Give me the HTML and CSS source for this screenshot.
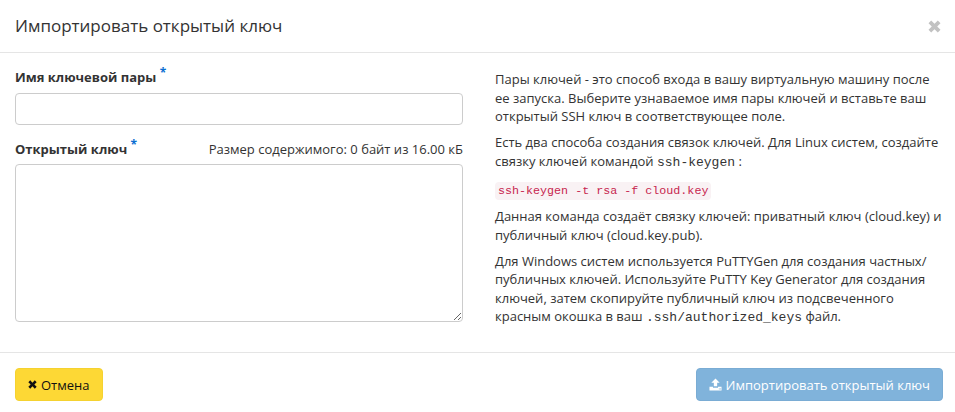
FILE: index.html
```html
<!DOCTYPE html>
<html lang="ru">
<head>
  <meta charset="UTF-8" />
  <meta name="viewport" content="width=device-width, initial-scale=1" />
  <title>Импортировать открытый ключ</title>
  <link rel="stylesheet" href="styles.css">
</head>
<body>

  <div class="modal">
    <div class="modal-header">
      <h4 class="modal-title">Импортировать открытый ключ</h4>
      <button class="close" aria-label="Закрыть">
        <svg width="13" height="13" viewBox="0 0 13 13"><path d="M0.5 3.2L3.2 0.5 6.5 3.8 9.8 0.5 12.5 3.2 9.2 6.5 12.5 9.8 9.8 12.5 6.5 9.2 3.2 12.5 0.5 9.8 3.8 6.5Z" fill="#c2c2c2"/></svg>
      </button>
    </div>

    <div class="modal-body">
      <div class="col-form">
        <div class="form-group">
          <label class="control-label" for="name">Имя ключевой пары <span class="req">*</span></label>
          <input type="text" id="name" class="form-control" />
        </div>
        <div class="form-group">
          <div class="label-row">
            <label class="control-label" for="key">Открытый ключ <span class="req">*</span></label>
            <span class="size-hint">Размер содержимого: 0 байт из 16.00 кБ</span>
          </div>
          <textarea id="key" class="form-control key-area"></textarea>
        </div>
      </div>

      <div class="col-help">
        <p>Пары ключей - это способ входа в вашу виртуальную машину после ее запуска. Выберите узнаваемое имя пары ключей и вставьте ваш открытый SSH ключ в соответствующее поле.</p>
        <p>Есть два способа создания связок ключей. Для Linux систем, создайте связку ключей командой <span class="mono">ssh-keygen</span> :</p>
        <p class="code-line"><code>ssh-keygen -t rsa -f cloud.key</code></p>
        <p>Данная команда создаёт связку ключей: приватный ключ (cloud.key) и публичный ключ (cloud.key.pub).</p>
        <p>Для Windows систем используется PuTTYGen для создания частных/публичных ключей. Используйте PuTTY Key Generator для создания ключей, затем скопируйте публичный ключ из подсвеченного красным окошка в ваш <span class="mono">.ssh/authorized_keys</span> файл.</p>
      </div>
    </div>

    <div class="modal-footer">
      <button class="btn btn-cancel">
        <svg width="9" height="9" viewBox="0 0 13 13"><path d="M0.5 3.2L3.2 0.5 6.5 3.8 9.8 0.5 12.5 3.2 9.2 6.5 12.5 9.8 9.8 12.5 6.5 9.2 3.2 12.5 0.5 9.8 3.8 6.5Z" fill="#111"/></svg>
        Отмена
      </button>
      <button class="btn btn-primary" disabled>
        <svg width="13" height="13" viewBox="0 0 14 14"><path d="M7 0.5L2.5 5H5.2V9H8.8V5H11.5Z" fill="#fff"/><path d="M0.5 9.5H4.3V10.5H9.7V9.5H13.5V13.5H0.5Z" fill="#fff"/><rect x="10.6" y="11.3" width="1" height="1" fill="#80b3db"/><rect x="12" y="11.3" width="1" height="1" fill="#80b3db"/></svg>
        Импортировать открытый ключ
      </button>
    </div>
  </div>

</body>
</html>
```

FILE: styles.css
```css
body {
  margin: 0;
  background: #fff;
  color: #333;
  font-family: 'Open Sans', 'Noto Sans', sans-serif;
  font-size: 13px;
  line-height: 1.42857;
}

.modal {
  width: 955px;
  background: #fff;
}

/* Header */
.modal-header {
  display: flex;
  justify-content: space-between;
  align-items: center;
  padding: 15px 14px 15px 15px;
  border-bottom: 1px solid #e5e5e5;
}

.modal-title {
  margin: 0;
  font-size: 17px;
  font-weight: normal;
  line-height: 22px;
  color: #333;
}

.close {
  background: none;
  border: none;
  padding: 0;
  display: flex;
  cursor: pointer;
}

/* Body */
.modal-body {
  display: grid;
  grid-template-columns: 448px 1fr;
  column-gap: 32px;
  padding: 15px 10px 15px 15px;
}

.form-group {
  margin-bottom: 15px;
}

.control-label {
  display: inline-block;
  margin-bottom: 6px;
  font-weight: bold;
}

.req {
  color: #0a6ed1;
  font-size: 12px;
  vertical-align: top;
  position: relative;
  top: -4px;
}

.label-row {
  display: flex;
  justify-content: space-between;
}

.size-hint {
  color: #333;
}

.form-control {
  display: block;
  box-sizing: border-box;
  width: 100%;
  height: 32px;
  margin: 0;
  padding: 6px 12px;
  border: 1px solid #ccc;
  border-radius: 4px;
  font-family: inherit;
  font-size: 13px;
  background: #fff;
}

.key-area {
  height: 158px;
  resize: vertical;
}

.col-help {
  padding-top: 2px;
}

.col-help p {
  margin: 0 0 7.5px;
}

.mono {
  font-family: 'Liberation Mono', monospace;
  font-size: 13px;
}

code {
  font-family: 'Liberation Mono', monospace;
  font-size: 11.7px;
  color: #c7254e;
  background: #f9f2f4;
  padding: 2px 3px;
  border-radius: 4px;
}

/* Footer */
.modal-footer {
  display: flex;
  justify-content: space-between;
  padding: 15px 12px 15px 15px;
  border-top: 1px solid #e5e5e5;
}

.btn {
  display: flex;
  align-items: center;
  gap: 4px;
  height: 33px;
  padding: 0 12px;
  border: 1px solid transparent;
  border-radius: 4px;
  font-family: inherit;
  font-size: 13px;
  cursor: pointer;
}

.btn-cancel {
  background: #fdd835;
  border-color: #f5d230;
  color: #111;
}

.btn-primary {
  background: #80b3db;
  border-color: #7aacd4;
  color: #fff;
  cursor: not-allowed;
}
```
